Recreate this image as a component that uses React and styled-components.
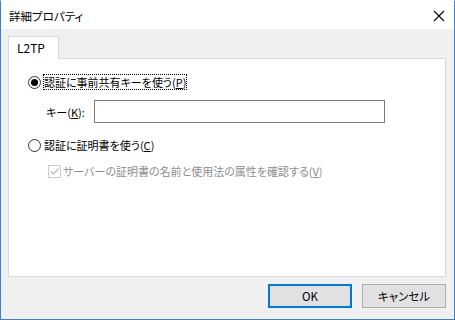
import React from 'react';
import styled, { createGlobalStyle } from 'styled-components';

const GlobalStyle = createGlobalStyle`
  html, body {
    margin: 0;
    padding: 0;
    background: #fff;
  }
  body {
    font-family: "Noto Sans CJK JP", "Noto Sans", sans-serif;
    font-size: 11px;
    font-feature-settings: "palt";
    color: #000;
  }
`;

const App = () => {
  return (
    <>
      <GlobalStyle />
      <Window>
        <TitleBar>
          <Title>詳細プロパティ</Title>
          <CloseBtn>
            <svg width="12" height="12" viewBox="0 0 12 12">
              <path d="M1 1 L11 11 M11 1 L1 11" stroke="#000" strokeWidth="1.1" />
            </svg>
          </CloseBtn>
        </TitleBar>
        <Body>
          <TabStrip>
            <Tab>L2TP</Tab>
          </TabStrip>
          <Panel>
            <OptionRow>
              <Radio checked />
              <Focused>認証に事前共有キーを使う(<u>P</u>)</Focused>
            </OptionRow>
            <KeyRow>
              <KeyLabel>キー(<u>K</u>):</KeyLabel>
              <TextInput />
            </KeyRow>
            <OptionRow $top={14}>
              <Radio />
              <Label>認証に証明書を使う(<u>C</u>)</Label>
            </OptionRow>
            <CheckRow>
              <CheckBox>
                <svg width="11" height="11" viewBox="0 0 11 11">
                  <path d="M2 5.5 L4.5 8 L9.5 2.5" stroke="#b5b5b5" strokeWidth="1.2" fill="none" />
                </svg>
              </CheckBox>
              <DisabledLabel>サーバーの証明書の名前と使用法の属性を確認する(<u>V</u>)</DisabledLabel>
            </CheckRow>
          </Panel>
          <Footer>
            <Button $primary>OK</Button>
            <Button>キャンセル</Button>
          </Footer>
        </Body>
      </Window>
    </>
  );
};

export default App;

const Window = styled.div`
  width: 455px;
  height: 320px;
  box-sizing: border-box;
  border: 1px solid #3a83cc;
  border-top-color: #ffffff;
  display: flex;
  flex-direction: column;
  background: #f0f0f0;
`;

const TitleBar = styled.div`
  height: 28px;
  background: #fff;
  display: flex;
  align-items: center;
  justify-content: space-between;
  padding: 0 8px 0 8px;
`;

const Title = styled.div`
  font-size: 11.5px;
  padding-top: 1px;
  color: #000;
`;

const CloseBtn = styled.div`
  width: 12px;
  height: 12px;
  display: flex;
  margin-right: 1px;
  margin-top: 2px;
`;

const Body = styled.div`
  flex: 1;
  display: flex;
  flex-direction: column;
  padding: 7px 8px 10px 7px;
`;

const TabStrip = styled.div`
  display: flex;
  height: 22px;
`;

const Tab = styled.div`
  width: 51px;
  box-sizing: border-box;
  height: 23px;
  border: 1px solid #d9d9d9;
  border-bottom: none;
  background: #fff;
  padding: 3px 0 0 8px;
  font-size: 12px;
  line-height: 16px;
  position: relative;
  z-index: 1;
`;

const Panel = styled.div`
  height: 219px;
  box-sizing: border-box;
  border: 1px solid #d9d9d9;
  background: #fff;
  padding: 15px 0 0 19px;
  display: flex;
  flex-direction: column;
`;

const OptionRow = styled.div`
  display: flex;
  align-items: center;
  height: 16px;
  margin-top: ${p => p.$top || 0}px;
`;

const Radio = styled.span`
  width: 13px;
  height: 13px;
  box-sizing: border-box;
  border: 1px solid #333;
  border-radius: 50%;
  display: flex;
  align-items: center;
  justify-content: center;
  margin-right: 2px;
  &::after {
    content: "";
    width: 7px;
    height: 7px;
    border-radius: 50%;
    background: ${p => (p.checked ? '#000' : 'transparent')};
  }
`;

const Label = styled.span`
  line-height: 16px;
  padding: 0 1px;
  u {
    text-underline-offset: 1px;
  }
`;

const Focused = styled(Label)`
  outline: 1px dotted #000;
  outline-offset: -1px;
`;

const KeyRow = styled.div`
  display: flex;
  align-items: center;
  margin-top: 10px;
  padding-left: 18px;
`;

const KeyLabel = styled.span`
  width: 48px;
`;

const TextInput = styled.div`
  width: 291px;
  height: 23px;
  box-sizing: border-box;
  border: 1px solid #7a7a7a;
  background: #fff;
`;

const CheckRow = styled.div`
  display: flex;
  align-items: center;
  margin-top: 10px;
  padding-left: 20px;
`;

const CheckBox = styled.span`
  width: 13px;
  height: 13px;
  box-sizing: border-box;
  border: 1px solid #cccccc;
  display: flex;
  align-items: center;
  justify-content: center;
  margin-right: 2px;
`;

const DisabledLabel = styled.span`
  color: #8d8d8d;
  line-height: 16px;
`;

const Footer = styled.div`
  display: flex;
  justify-content: flex-end;
  gap: 10px;
  margin-top: 7px;
`;

const Button = styled.div`
  width: 84px;
  height: 24px;
  box-sizing: border-box;
  background: #e1e1e1;
  border: ${p => (p.$primary ? '2px solid #0078d7' : '1px solid #adadad')};
  display: flex;
  align-items: center;
  justify-content: center;
  font-size: 11.5px;
`;
